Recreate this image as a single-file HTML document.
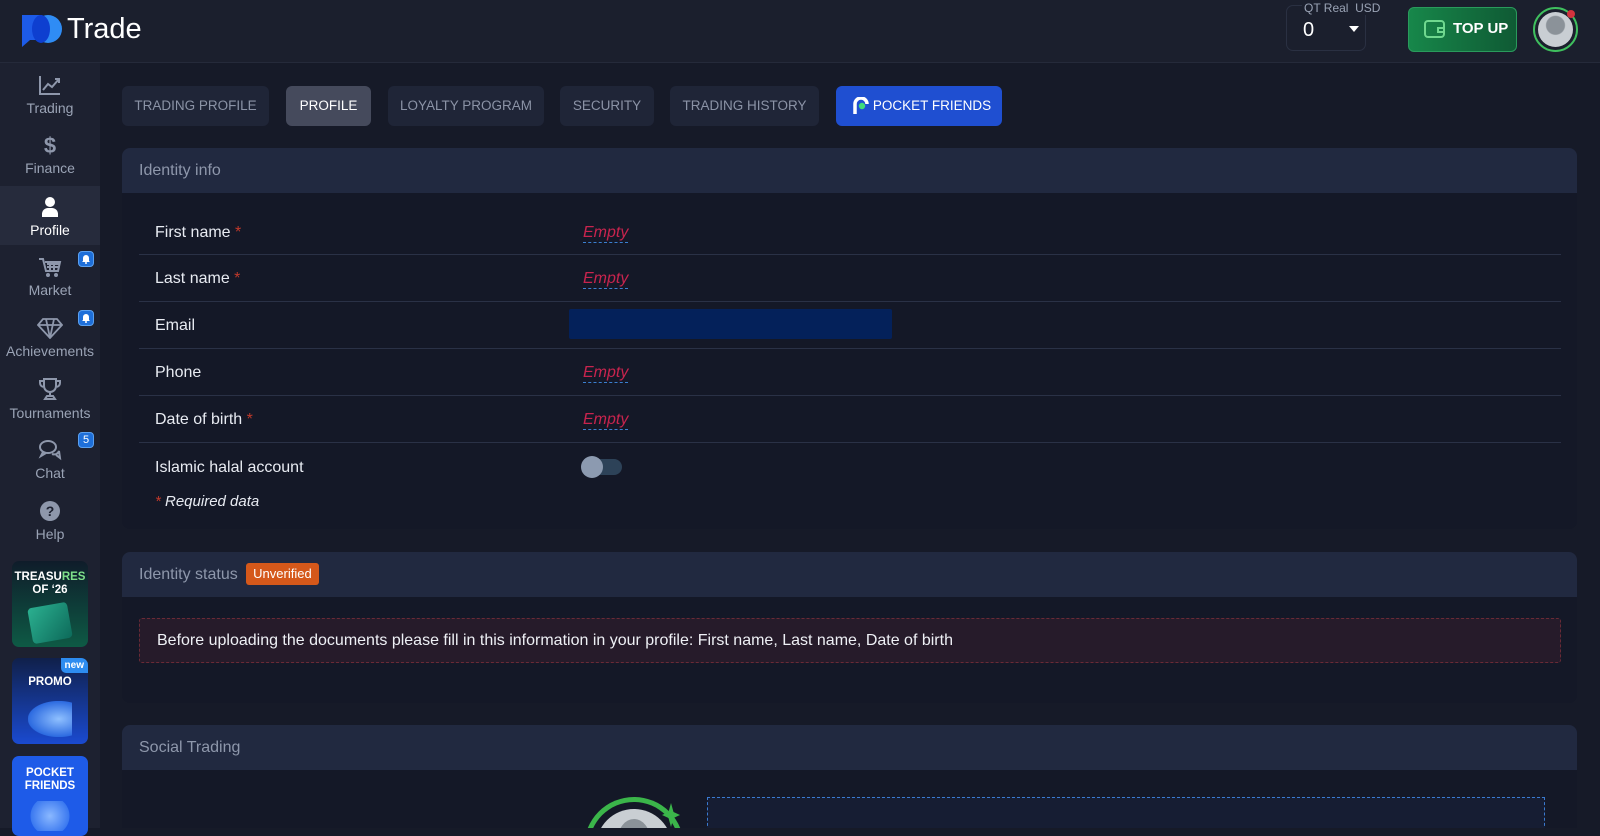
<!DOCTYPE html>
<html><head><meta charset="utf-8"><style>
*{box-sizing:border-box;margin:0;padding:0}
body{width:1600px;height:828px;overflow:hidden;background:#161a28;font-family:"Liberation Sans","DejaVu Sans",sans-serif;color:#e6e9f0;position:relative}
.hdr{position:absolute;left:0;top:0;width:1600px;height:63px;background:#1b1f2d;border-bottom:1px solid #252a3a}
.side{position:absolute;left:0;top:63px;width:100px;height:765px;background:#1d2130}
.nav{position:absolute;left:0;width:100px;text-align:center;font-size:14px;color:#9aa3b5}
.nav svg{display:block;margin:0 auto 4px}
.badge{position:absolute;left:78px;width:16px;height:16px;border-radius:4px;background:#1e6fd9;border:1px solid #5aa0f0;font-size:11px;color:#fff;text-align:center;line-height:14px}
.badge svg{display:block;margin:2px auto 0}
.tab{position:absolute;top:86px;height:40px;border-radius:6px;background:#1f2537;color:#8b93a6;font-size:13.5px;line-height:40px;text-align:center}
.card{position:absolute;left:122px;width:1455px;background:#141827;border-radius:8px;overflow:hidden}
.ch{height:45px;background:#212940;color:#8e97ab;font-size:16px;line-height:45px;padding-left:17px}
.row{position:absolute;left:17px;width:1422px;border-bottom:1px solid #2a3146;height:47px}
.lab{position:absolute;left:16px;font-size:16px;color:#e8ebf2}
.req{color:#c0392b}
.emp{position:absolute;left:444px;font-size:16px;color:#c8244e;font-style:italic;border-bottom:1px dashed #3b7fd0;line-height:18px}
.ban{position:absolute;left:12px;width:76px;border-radius:7px;overflow:hidden;text-align:center;font-weight:bold;font-size:11.5px;color:#fff;line-height:13px}
</style></head><body>
<div class="hdr">
 <svg style="position:absolute;left:22px;top:14px" width="42" height="34" viewBox="0 0 42 34"><path d="M0 1h20v25H8l-8 7z" fill="#1d5be8"/><circle cx="26" cy="15" r="14" fill="#2f8cf5"/><ellipse cx="19" cy="15" rx="9" ry="14" fill="#0e3fd0"/></svg>
 <div style="position:absolute;left:67px;top:13px;font-size:29px;color:#fff">Trade</div>
 <div style="position:absolute;left:1286px;top:5px;width:80px;height:46px;border:1px solid #2a3042;border-radius:7px"></div>
 <div style="position:absolute;left:1302px;top:1px;font-size:12px;color:#9aa3b5;background:#1b1f2d;padding:0 2px">QT Real &nbsp;USD</div>
 <div style="position:absolute;left:1303px;top:19px;font-size:20px;color:#fff">0</div>
 <div style="position:absolute;left:1369px;top:26px;width:0;height:0;border-left:5px solid transparent;border-right:5px solid transparent;border-top:6px solid #fff;margin-left:-20px"></div>
 <div style="position:absolute;left:1408px;top:7px;width:109px;height:45px;border-radius:6px;background:linear-gradient(90deg,#17874a,#0f5a34);border:1px solid #2a9a5c"></div>
 <svg style="position:absolute;left:1424px;top:19px" width="22" height="20" viewBox="0 0 22 20"><rect x="1" y="2" width="19" height="16" rx="3" fill="none" stroke="#6fd88f" stroke-width="2"/><path d="M14 9h6v4h-6z" fill="none" stroke="#6fd88f" stroke-width="2"/></svg>
 <div style="position:absolute;left:1453px;top:20px;font-size:15px;font-weight:bold;color:#fff">TOP UP</div>
 <div style="position:absolute;left:1533px;top:7px;width:45px;height:45px;border-radius:50%;border:2px solid #3fbf5e;background:#1b1f2d;padding:3px"><div style="width:35px;height:35px;border-radius:50%;background:radial-gradient(circle at 50% 38%,#8b9299 9px,#c9ced3 10px);"></div></div>
 <div style="position:absolute;left:1567px;top:10px;width:8px;height:8px;border-radius:50%;background:#d2333d"></div>
</div>
<div class="side">
 <div style="position:absolute;left:0;top:123px;width:100px;height:59px;background:#262b3c"></div>
</div>
<div class="nav" style="top:74px"><svg width="24" height="22" viewBox="0 0 24 22"><path d="M2 2v18h20M5 16l5-6 4 3 7-8M17 5h4v4" fill="none" stroke="#8e97ab" stroke-width="2"/></svg>Trading</div>
<div class="nav" style="top:134px"><div style="font-size:22px;font-weight:bold;color:#8e97ab;height:26px;line-height:24px">$</div>Finance</div>
<div class="nav" style="top:196px;color:#fff"><svg width="20" height="22" viewBox="0 0 20 22"><circle cx="10" cy="6" r="5" fill="#fff"/><path d="M2 21v-3a6 6 0 0 1 6-6h4a6 6 0 0 1 6 6v3z" fill="#fff"/></svg>Profile</div>
<div class="nav" style="top:256px"><svg width="24" height="22" viewBox="0 0 24 22"><path d="M1 3h4l3 12h12l2-9H7M9 8h12M9 11h11M12 6v9M16 6v9" fill="none" stroke="#8e97ab" stroke-width="2"/><circle cx="10" cy="19" r="2" fill="#8e97ab"/><circle cx="18" cy="19" r="2" fill="#8e97ab"/></svg>Market</div>
<div class="badge" style="top:251px"><svg width="10" height="10" viewBox="0 0 10 10"><path d="M2 7V4a3 3 0 0 1 6 0v3l1 1H1z" fill="#fff"/><circle cx="5" cy="9" r="1" fill="#fff"/></svg></div>
<div class="nav" style="top:317px"><svg width="26" height="22" viewBox="0 0 26 22"><path d="M6 2h14l5 6-12 13L1 8zM1 8h24M9 2l4 19 4-19" fill="none" stroke="#8e97ab" stroke-width="1.8"/></svg>Achievements</div>
<div class="badge" style="top:310px"><svg width="10" height="10" viewBox="0 0 10 10"><path d="M2 7V4a3 3 0 0 1 6 0v3l1 1H1z" fill="#fff"/><circle cx="5" cy="9" r="1" fill="#fff"/></svg></div>
<div class="nav" style="top:377px"><svg width="24" height="24" viewBox="0 0 24 24"><path d="M6 2h12v7a6 6 0 0 1-12 0zM6 4H2v2a4 4 0 0 0 4 4M18 4h4v2a4 4 0 0 1-4 4M12 15v4M7 22h10l-2-3H9z" fill="none" stroke="#8e97ab" stroke-width="2"/></svg>Tournaments</div>
<div class="nav" style="top:439px"><svg width="24" height="22" viewBox="0 0 24 22"><ellipse cx="10" cy="8" rx="8" ry="6" fill="none" stroke="#8e97ab" stroke-width="2"/><path d="M5 13l-2 4 5-3M14 15c3 1 6 0 7 -3l1 7-4-3" fill="none" stroke="#8e97ab" stroke-width="2"/></svg>Chat</div>
<div class="badge" style="top:432px">5</div>
<div class="nav" style="top:500px"><svg width="22" height="22" viewBox="0 0 22 22"><circle cx="11" cy="11" r="10" fill="#8e97ab"/><text x="11" y="16" text-anchor="middle" font-size="14" font-weight="bold" fill="#1d2130" font-family="Liberation Sans">?</text></svg>Help</div>
<div class="ban" style="top:561px;height:86px;background:linear-gradient(180deg,#0f1c2a,#0e5a45);padding-top:10px">TREASU<span style="color:#7fe08a">RES</span><br>OF ‘26<div style="margin:8px auto 0;width:40px;height:36px;background:linear-gradient(135deg,#2bb090,#0d6a5a);transform:rotate(-10deg);border-radius:4px"></div></div>
<div class="ban" style="top:658px;height:86px;background:linear-gradient(180deg,#10204a,#1a4ad0);padding-top:18px">PROMO<div style="position:absolute;right:0;top:0;background:#2d8cf0;font-size:10px;padding:1px 4px;border-radius:0 0 0 5px">new</div><div style="margin:12px auto 0;width:44px;height:36px;background:radial-gradient(ellipse at 70% 50%,#8fc0ff,#2c6ae0 70%,transparent 72%)"></div></div>
<div class="ban" style="top:756px;height:80px;background:#1e5be8;padding-top:11px">POCKET<br>FRIENDS<div style="margin:8px auto 0;width:46px;height:30px;background:radial-gradient(circle,#8ab8ff,#3a78f0 70%,transparent 72%)"></div></div>

<div class="tab" style="left:122px;width:147px">TRADING PROFILE</div>
<div class="tab" style="left:286px;width:85px;background:#454a5c;color:#fff">PROFILE</div>
<div class="tab" style="left:388px;width:156px">LOYALTY PROGRAM</div>
<div class="tab" style="left:560px;width:94px">SECURITY</div>
<div class="tab" style="left:670px;width:149px">TRADING HISTORY</div>
<div class="tab" style="left:836px;width:166px;background:#1f4fd1;color:#fff;padding-left:26px">POCKET FRIENDS<svg style="position:absolute;left:16px;top:11px" width="18" height="18" viewBox="0 0 18 18"><path d="M3 17V7a6 6 0 0 1 12 0" fill="none" stroke="#fff" stroke-width="3.5"/><circle cx="10" cy="9" r="3.2" fill="#3fdc7a"/></svg></div>

<div class="card" style="top:148px;height:381px">
 <div class="ch">Identity info</div>
 <div class="row" style="top:61px;height:46px"><span class="lab" style="top:15px">First name <span class="req">*</span></span><span class="emp" style="top:15px">Empty</span></div>
 <div class="row" style="top:107px"><span class="lab" style="top:15px">Last name <span class="req">*</span></span><span class="emp" style="top:15px">Empty</span></div>
 <div class="row" style="top:154px"><span class="lab" style="top:15px">Email</span><div style="position:absolute;left:430px;top:7px;width:323px;height:30px;background:#04215a;border-radius:2px"></div></div>
 <div class="row" style="top:201px"><span class="lab" style="top:15px">Phone</span><span class="emp" style="top:15px">Empty</span></div>
 <div class="row" style="top:248px"><span class="lab" style="top:15px">Date of birth <span class="req">*</span></span><span class="emp" style="top:15px">Empty</span></div>
 <span class="lab" style="top:311px;left:33px">Islamic halal account</span>
 <div style="position:absolute;left:461px;top:311px;width:39px;height:16px;border-radius:8px;background:#2d4258"></div>
 <div style="position:absolute;left:459px;top:308px;width:22px;height:22px;border-radius:50%;background:#8c9ab0"></div>
 <div style="position:absolute;left:33px;top:345px;font-size:15px;font-style:italic;color:#e8ebf2"><span class="req">*</span> Required data</div>
</div>

<div class="card" style="top:552px;height:151px">
 <div class="ch">Identity status <span style="display:inline-block;margin-left:4px;background:#d5581a;color:#fff;font-size:13px;line-height:22px;padding:0 7px;border-radius:3px;vertical-align:1px">Unverified</span></div>
 <div style="position:absolute;left:17px;top:66px;width:1422px;height:45px;border:1px dashed #6a2a36;background:#261b2a;border-radius:3px;font-size:16px;line-height:43px;padding-left:17px;color:#eef0f5">Before uploading the documents please fill in this information in your profile: First name, Last name, Date of birth</div>
</div>

<div class="card" style="top:725px;height:103px;border-radius:8px 8px 0 0">
 <div class="ch">Social Trading</div>
 <div style="position:absolute;left:462px;top:72px;width:100px;height:100px;border-radius:50%;border:5px solid #3bb54a;border-bottom-color:transparent"></div>
 <div style="position:absolute;left:474px;top:84px;width:76px;height:76px;border-radius:50%;background:#c9ced3"></div>
 <div style="position:absolute;left:496px;top:94px;width:32px;height:40px;border-radius:50%;background:#8b9299"></div>
 <svg style="position:absolute;left:540px;top:78px" width="18" height="24" viewBox="0 0 18 24"><path d="M9 0l2.5 9 6.5 3-6.5 3L9 24l-2.5-9L0 12l6.5-3z" fill="#3bb54a"/></svg>
 <div style="position:absolute;left:585px;top:72px;width:838px;height:60px;border:1px dashed #3a7ad0;background:#161d33"></div>
</div>
</body></html>
